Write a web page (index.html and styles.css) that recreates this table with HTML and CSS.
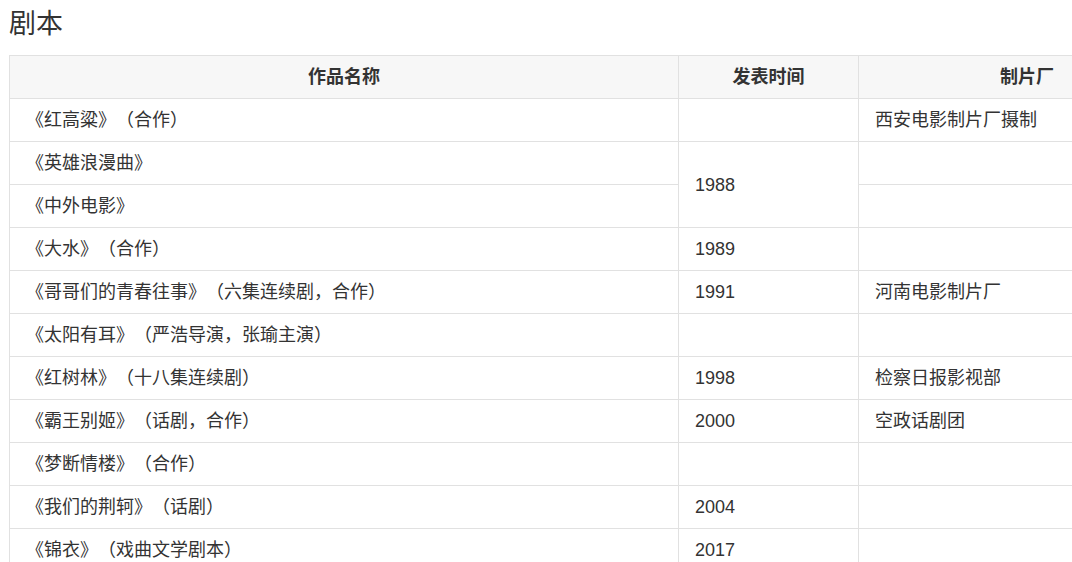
FILE: index.html
```html
<!DOCTYPE html>
<html lang="zh-CN">
<head>
<meta charset="utf-8">
<title>剧本</title>
<link rel="stylesheet" href="styles.css">
</head>
<body>
<div class="page">
  <h2 class="title">剧本</h2>
  <table class="works">
    <colgroup>
      <col class="c-name">
      <col class="c-year">
      <col class="c-studio">
    </colgroup>
    <thead>
      <tr><th>作品名称</th><th>发表时间</th><th>制片厂</th></tr>
    </thead>
    <tbody>
      <tr><td>《红高粱》（合作）</td><td></td><td>西安电影制片厂摄制</td></tr>
      <tr><td>《英雄浪漫曲》</td><td rowspan="2" class="num">1988</td><td></td></tr>
      <tr><td>《中外电影》</td><td></td></tr>
      <tr><td>《大水》（合作）</td><td class="num">1989</td><td></td></tr>
      <tr><td>《哥哥们的青春往事》（六集连续剧，合作）</td><td class="num">1991</td><td>河南电影制片厂</td></tr>
      <tr><td>《太阳有耳》（严浩导演，张瑜主演）</td><td></td><td></td></tr>
      <tr><td>《红树林》（十八集连续剧）</td><td class="num">1998</td><td>检察日报影视部</td></tr>
      <tr><td>《霸王别姬》（话剧，合作）</td><td class="num">2000</td><td>空政话剧团</td></tr>
      <tr><td>《梦断情楼》（合作）</td><td></td><td></td></tr>
      <tr><td>《我们的荆轲》（话剧）</td><td class="num">2004</td><td></td></tr>
      <tr><td>《锦衣》（戏曲文学剧本）</td><td class="num">2017</td><td></td></tr>
    </tbody>
  </table>
</div>
</body>
</html>
```
FILE: styles.css
```css
html, body {
  margin: 0;
  padding: 0;
  overflow: hidden;
  background: #fff;
}
.page {
  padding: 0 0 0 9px;
  font-family: "Liberation Sans", Arial, "Noto Sans CJK SC", sans-serif;
  color: #333;
  text-spacing-trim: space-all;
}
.title {
  margin: 0;
  padding: 7px 0 0 0;
  height: 55px;
  box-sizing: border-box;
  font-size: 27px;
  line-height: 34px;
  font-weight: normal;
  color: #333;
}
.works {
  border-collapse: collapse;
  table-layout: fixed;
  width: 1186px;
  font-size: 18px;
}
.c-name { width: 669px; }
.c-year { width: 180px; }
.c-studio { width: 337px; }
.works th,
.works td {
  border: 1px solid #e1e1e1;
  padding: 9px 16px;
  height: 24px;
  line-height: 24px;
  text-align: left;
  vertical-align: middle;
}
.works th {
  background: #f7f7f7;
  text-align: center;
  font-weight: bold;
}
```
